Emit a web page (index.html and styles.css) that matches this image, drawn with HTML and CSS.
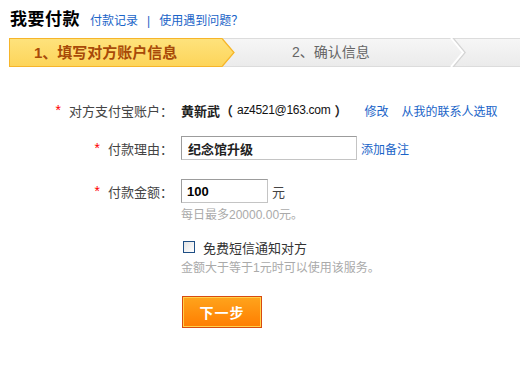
FILE: index.html
```html
<!DOCTYPE html>
<html lang="zh-CN">
<head>
<meta charset="utf-8">
<title>我要付款</title>
<link rel="stylesheet" href="styles.css">
</head>
<body>
<div class="page">
  <div class="head">
    <h1 class="title">我要付款</h1>
    <a class="link head-link" href="#">付款记录</a>
    <span class="sep">|</span>
    <a class="link" href="#">使用遇到问题？</a>
  </div>

  <div class="steps">
    <div class="step step-active">1、填写对方账户信息</div>
    <svg class="tip" width="13" height="29" viewBox="0 0 13 29">
      <defs>
        <linearGradient id="g" x1="0" y1="0" x2="0" y2="1">
          <stop offset="0" stop-color="#f6f6f6"/>
          <stop offset="1" stop-color="#ebebeb"/>
        </linearGradient>
        <linearGradient id="y" x1="0" y1="0" x2="0" y2="1">
          <stop offset="0" stop-color="#fee27c"/>
          <stop offset="1" stop-color="#fdd55a"/>
        </linearGradient>
      </defs>
      <rect x="0" y="0" width="13" height="29" fill="url(#g)"/>
      <line x1="0" y1="0.5" x2="13" y2="0.5" stroke="#dcdcdc"/>
      <line x1="0" y1="28.5" x2="13" y2="28.5" stroke="#dcdcdc"/>
      <polygon points="0,0 12.5,14.5 0,29" fill="url(#y)"/>
      <polyline points="0,0.5 12,14.5 0,28.5" fill="none" stroke="#f6b52a" stroke-width="1.2"/>
    </svg>
    <div class="step step-next">2、确认信息</div>
    <svg class="chev" width="16" height="29" viewBox="0 0 16 29">
      <rect x="0" y="0" width="16" height="29" fill="url(#g)"/>
      <line x1="0" y1="0.5" x2="16" y2="0.5" stroke="#dcdcdc"/>
      <line x1="0" y1="28.5" x2="16" y2="28.5" stroke="#dcdcdc"/>
      <polyline points="2,0 14,14.5 2,29" fill="none" stroke="#d4d4d4" stroke-width="3"/>
      <polyline points="1,0 13,14.5 1,29" fill="none" stroke="#ffffff" stroke-width="2"/>
    </svg>
    <div class="step-rest"></div>
  </div>

  <div class="form">
    <div class="row row-1">
      <div class="label"><span class="req">*</span> 对方支付宝账户：</div>
      <div class="field">
        <span class="name">黄新武（</span><span class="email">az4521@163.com</span><span class="name paren">）</span>
        <a class="link act" href="#">修改</a>
        <a class="link act2" href="#">从我的联系人选取</a>
      </div>
    </div>

    <div class="row row-2">
      <div class="label"><span class="req">*</span> 付款理由：</div>
      <div class="field">
        <span class="input input-wide">纪念馆升级</span>
        <a class="link note" href="#">添加备注</a>
      </div>
    </div>

    <div class="row row-3">
      <div class="label"><span class="req">*</span> 付款金额：</div>
      <div class="field">
        <span class="input input-amt">100</span>
        <span class="unit">元</span>
      </div>
    </div>
    <div class="hint hint-1">每日最多20000.00元。</div>

    <div class="check-row">
      <span class="box"></span>
      <span class="check-text">免费短信通知对方</span>
    </div>
    <div class="hint hint-2">金额大于等于1元时可以使用该服务。</div>

    <div class="btn-row">
      <button class="btn" type="button"><span class="btn-in">下一步</span></button>
    </div>
  </div>
</div>
</body>
</html>
```

FILE: styles.css
```css
* { box-sizing: border-box; }
html, body { margin: 0; padding: 0; background: #fff; }
body {
  font-family: "Liberation Sans", "Noto Sans CJK SC", sans-serif;
  font-size: 12px;
  color: #333;
}
.page { width: 520px; height: 369px; overflow: hidden; }

.head {
  display: flex;
  align-items: baseline;
  padding: 9px 0 0 10px;
  height: 38px;
}
.title {
  margin: 0;
  font-size: 17px;
  font-weight: bold;
  color: #000;
  line-height: 22px;
  letter-spacing: 0.5px;
}
.link { color: #1a64c8; text-decoration: none; font-size: 12px; }
.head-link { margin-left: 10px; }
.sep { color: #1a64c8; margin: 0 9px 0 9px; font-size: 12px; }

.steps {
  display: flex;
  height: 29px;
  margin-left: 9px;
}
.step {
  height: 29px;
  line-height: 27px;
  font-size: 14px;
}
.step-active {
  width: 213px;
  padding-left: 24px;
  background: linear-gradient(#fee27c, #fdd55a);
  border: 1px solid #f6b52a;
  border-right: 0;
  color: #a84a08;
  font-weight: bold;
  font-size: 15px;
  white-space: nowrap;
}
.tip, .chev { display: block; flex: none; }
.step-next, .step-rest {
  background: linear-gradient(#f6f6f6, #ebebeb);
  border-top: 1px solid #dcdcdc;
  border-bottom: 1px solid #dcdcdc;
}
.step-next {
  width: 215px;
  padding-left: 57px;
  color: #666;
}
.step-rest { flex: 1; }

.form { padding-top: 31px; }
.row {
  display: flex;
  align-items: center;
  height: 24px;
}
.row-2 { margin-top: 14px; }
.row-3 { margin-top: 19px; }
.label {
  width: 173px;
  text-align: right;
  font-size: 13px;
  color: #444;
  white-space: nowrap;
}
.req { color: #f00; font-family: "Liberation Mono", monospace; font-size: 14px; margin-right: 3px; }
.field {
  margin-left: 8px;
  display: flex;
  align-items: center;
  white-space: nowrap;
}
.name { font-weight: bold; font-size: 13px; color: #222; }
.email { font-size: 12px; color: #111; margin-left: 4px; letter-spacing: -0.3px; }
.paren { margin-left: 4px; }
.act { margin-left: 17px; }
.act2 { margin-left: 13px; }

.input {
  display: flex;
  align-items: center;
  height: 24px;
  border: 1px solid #9c9c9c;
  border-right-color: #c4c4c4;
  border-bottom-color: #c4c4c4;
  padding-left: 6px;
  font-weight: bold;
  font-size: 13px;
  color: #222;
  background: #fff;
}
.input-wide { width: 176px; }
.input-amt { width: 87px; font-family: "Liberation Sans", sans-serif; color: #000; padding-left: 5px; }
.note { margin-left: 4px; }
.unit { margin-left: 4px; font-size: 13px; color: #444; }

.hint {
  margin-left: 181px;
  color: #aaa;
  font-size: 12px;
  line-height: 14px;
}
.hint-1 { margin-top: 5px; }
.check-row {
  margin: 18px 0 0 183px;
  display: flex;
  align-items: center;
  height: 14px;
}
.box {
  width: 12px;
  height: 12px;
  border: 1px solid #1f4f85;
  background: linear-gradient(135deg, #e4e4e4, #fff);
}
.check-text { margin-left: 8px; font-size: 13px; color: #333; }
.hint-2 { margin-top: 7px; }

.btn-row { margin: 21px 0 0 182px; }
.btn {
  display: block;
  width: 80px;
  height: 32px;
  padding: 0;
  border: 1px solid #d84a10;
  background: linear-gradient(#ffa41c, #ff7d00);
  cursor: pointer;
}
.btn-in {
  display: flex;
  align-items: center;
  justify-content: center;
  height: 30px;
  border: 1px solid #ffd14a;
  color: #fff;
  font-family: "Noto Sans CJK SC", sans-serif;
  font-size: 14px;
  font-weight: bold;
  letter-spacing: 1px;
}
```
